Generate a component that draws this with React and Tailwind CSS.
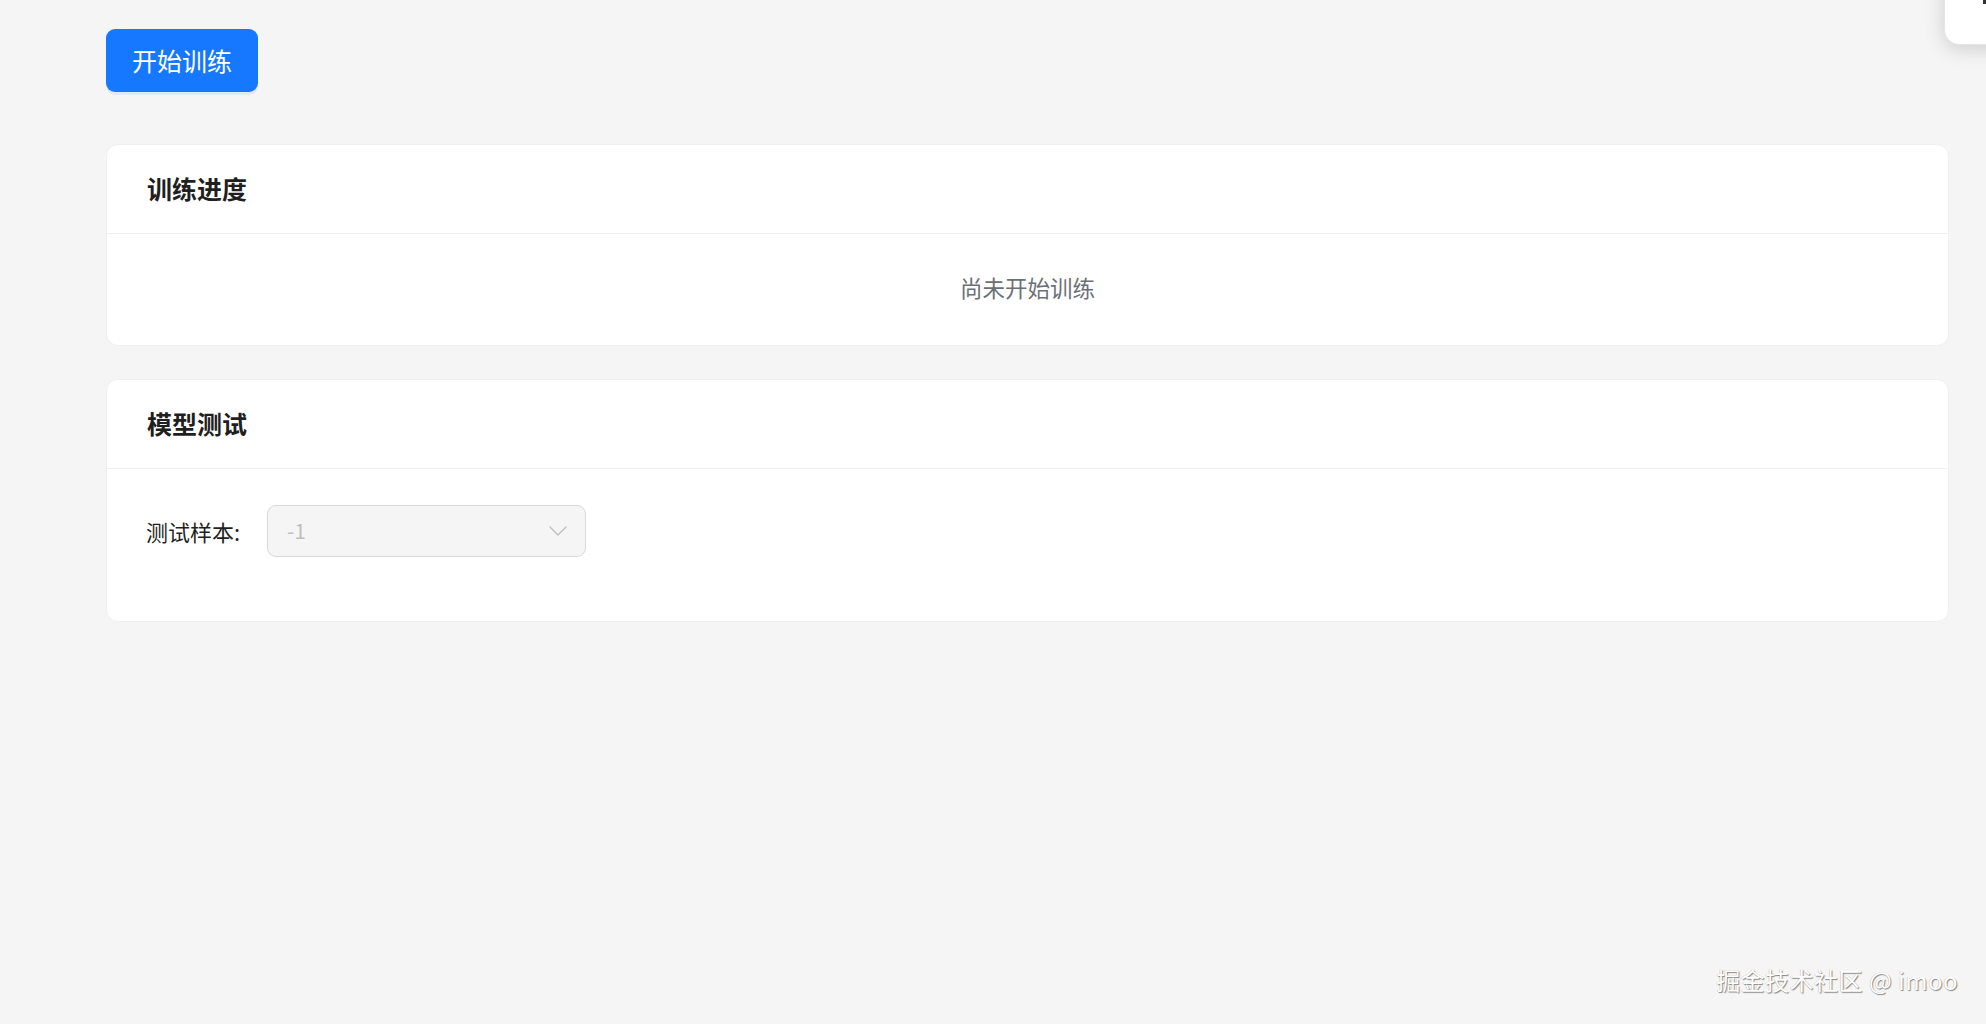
const cjk = { fontFamily: '"Noto Sans CJK SC", "Noto Sans", sans-serif' };

function Card({ title, children, bodyClass }) {
  return (
    <div className="bg-white rounded-[12px] border border-[#f0f0f0]">
      <div className="h-[89px] flex items-center px-[40px] border-b border-[#f0f0f0]">
        <h2 className="text-[25px] font-bold text-[#1f1f1f]">{title}</h2>
      </div>
      <div className={bodyClass}>{children}</div>
    </div>
  );
}

export default function App() {
  return (
    <div className="relative min-h-screen overflow-hidden bg-[#f5f5f5]" style={cjk}>
      {/* floating widget cut off at the top right */}
      <div className="absolute left-[1944px] top-[-40px] w-[80px] h-[85px] bg-white rounded-[15px] border border-[#e6e6e6] shadow-[0_4px_20px_rgba(0,0,0,0.16)]" />
      <div className="absolute right-0 top-0 w-[3px] h-[4px] bg-[#333]" />

      <div className="pl-[106px] pr-[37px] pt-[29px]">
        <button className="h-[63px] px-[26px] rounded-[9px] bg-[#1677ff] text-white text-[25px] shadow-[0_3px_0_rgba(5,145,255,0.1)]">
          开始训练
        </button>

        <div className="mt-[52px] flex flex-col gap-[33px]">
          <Card title="训练进度" bodyClass="h-[111px] flex items-center justify-center">
            <span className="text-[22.5px] text-[#6b6f76] -translate-y-[2px]">尚未开始训练</span>
          </Card>

          <Card title="模型测试" bodyClass="pt-[36px] pb-[64px] pl-[39px] pr-[36px]">
            <div className="flex items-center">
              <label className="text-[22px] text-[#1f1f1f] w-[121px]">测试样本:</label>
              <div className="w-[319px] h-[52px] rounded-[9px] border border-[#d9d9d9] bg-[#f5f5f5] flex items-center justify-between pl-[19px] pr-[18px]">
                <span className="text-[21px] text-[#bfbfbf]">-1</span>
                <svg width="18" height="10" viewBox="0 0 18 10" fill="none">
                  <path d="M1 1 L9 9 L17 1" stroke="#bfbfbf" strokeWidth="1.4" strokeLinecap="round" strokeLinejoin="round" />
                </svg>
              </div>
            </div>
          </Card>
        </div>
      </div>

      <div
        className="absolute right-[28px] top-[962px] text-[24px] text-white tracking-[0.5px]"
        style={{ textShadow: '1px 1px 1px rgba(0,0,0,0.45), -0.5px -0.5px 0 rgba(0,0,0,0.25)' }}
      >
        掘金技术社区 @ imoo
      </div>
    </div>
  );
}
